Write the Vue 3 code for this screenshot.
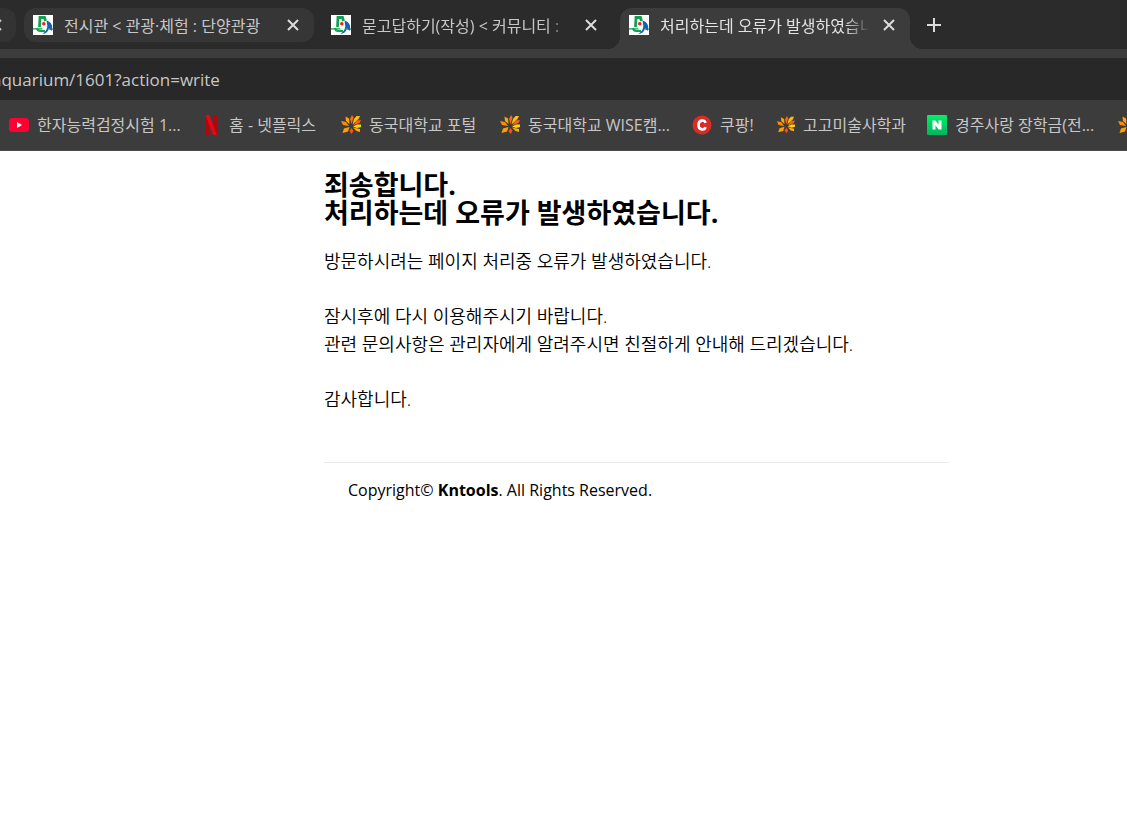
<script setup>
import { ref } from 'vue'

const tabs = ref([
  { id: 1, title: '전시관 < 관광·체험 : 단양관광', state: 'hovered' },
  { id: 2, title: '묻고답하기(작성) < 커뮤니티 :', state: 'idle' },
  { id: 3, title: '처리하는데 오류가 발생하였습니', state: 'active' }
])

const url = ref('aquarium/1601?action=write')

const bookmarks = [
  { icon: 'youtube', label: '한자능력검정시험 1...' },
  { icon: 'netflix', label: '홈 - 넷플릭스' },
  { icon: 'lotus', label: '동국대학교 포털' },
  { icon: 'lotus', label: '동국대학교 WISE캠...' },
  { icon: 'coupang', label: '쿠팡!' },
  { icon: 'lotus-small', label: '고고미술사학과' },
  { icon: 'naver', label: '경주사랑 장학금(전...' },
  { icon: 'lotus', label: '' }
]
</script>

<template>
  <div class="browser">
    <header>
      <div class="tab-strip">
        <div class="tab-stub">
          <svg width="2" height="12" viewBox="10 0 2 12"><path d="M1 1l10 10M11 1L1 11" /></svg>
        </div>
        <div v-for="tab in tabs" :key="tab.id" class="tab" :class="tab.state">
          <svg class="favicon" width="20" height="20" viewBox="0 0 20 20">
            <rect width="20" height="20" fill="#fff" />
            <path d="M6.500 12L7 2.500H11.500L12.500 6" fill="none" stroke="#12a150" stroke-width="2.800" />
            <path d="M0 13.800H9.500M16 14.200H20" fill="none" stroke="#12a150" stroke-width="1.200" />
            <path d="M4 13Q4.500 16 7.500 16H12" fill="none" stroke="#12a150" stroke-width="2" />
            <path d="M13.500 5.500C18 6.500 20.500 11 18.500 16L16 13C15.500 16 13.500 18.500 9.500 19L13 15.500Q15 12 14 9Z" fill="#1261b5" />
            <circle cx="10.800" cy="8.700" r="1.800" fill="#e8251c" />
          </svg>
          <span class="tab-title">{{ tab.title }}</span>
          <button class="icon-button" type="button" aria-label="탭 닫기">
            <svg width="12" height="12" viewBox="0 0 12 12"><path d="M1 1l10 10M11 1L1 11" /></svg>
          </button>
        </div>
        <button class="icon-button new-tab" type="button" aria-label="새 탭">
          <svg width="14" height="14" viewBox="0 0 14 14"><path d="M7 0v14M0 7h14" /></svg>
        </button>
      </div>

      <div class="toolbar">
        <input v-model="url" class="address" type="text" aria-label="주소창" spellcheck="false">
      </div>

      <nav class="bookmarks">
        <a v-for="(mark, i) in bookmarks" :key="i" href="#" :aria-label="mark.label || '북마크'">
          <svg v-if="mark.icon === 'youtube'" width="20" height="20" viewBox="0 0 20 20">
            <rect y="3" width="20" height="14" rx="3.500" fill="#ff0033" />
            <path d="M8 7v6l5-3z" fill="#fff" />
          </svg>
          <svg v-else-if="mark.icon === 'netflix'" width="20" height="20" viewBox="0 0 20 20">
            <path d="M4.500 0h4v20l-4 .5zM12 0h4v20.500l-4-.5z" fill="#b1060f" />
            <path d="M4.500 0h4L16 20.500l-4-.5z" fill="#e50914" />
          </svg>
          <svg v-else-if="mark.icon === 'coupang'" width="20" height="20" viewBox="0 0 20 20">
            <circle cx="10" cy="10" r="9.500" fill="#da2c27" />
            <path d="M13.500 7.800C12.500 4.500 6.500 4.500 6.500 10s6 5.500 7 2.200" fill="none" stroke="#fff" stroke-width="2.600" />
          </svg>
          <svg v-else-if="mark.icon === 'naver'" width="20" height="20" viewBox="0 0 20 20">
            <defs>
              <linearGradient id="naver-bg" x1="0" y1="0" x2="0" y2="1">
                <stop offset="0" stop-color="#00ee68" />
                <stop offset="1" stop-color="#04b45f" />
              </linearGradient>
            </defs>
            <rect width="20" height="20" rx="1" fill="url(#naver-bg)" />
            <path d="M5.500 5.500h3l3 4.300V5.500h3v9h-3l-3-4.300v4.300h-3z" fill="#fff" />
          </svg>
          <svg v-else width="20" height="20" :viewBox="mark.icon === 'lotus' ? '0 0 20 20' : '-2 -1 22 22'">
            <path d="M4.500 1.500L8 3.500 8.500 9 5 6z" fill="#ffa600" />
            <path d="M11 0L12.500 2.500 10.500 9 9 4z" fill="#ff6a10" />
            <path d="M15.500 1H19L17.500 4 11.500 9.500 13 4z" fill="#ffc000" />
            <path d="M16 5.500L20 5 18.500 8 12 10.500z" fill="#ff5f1c" />
            <path d="M12 11.500L16 9.500H20V12L16 13z" fill="#ffd400" />
            <path d="M12 12.500L19 14V17L15.500 16z" fill="#ffae00" />
            <path d="M10.500 13L12.500 16 10.500 19 8.500 16z" fill="#ff5010" />
            <path d="M8.500 12L7 16.500 1.500 18 3 13.500z" fill="#ffa000" />
            <path d="M0 6L5 7 8 11 2 10z" fill="#ff8c00" />
          </svg>
          <span v-if="mark.label">{{ mark.label }}</span>
        </a>
      </nav>
    </header>

    <main>
      <h1>죄송합니다.<br>처리하는데 오류가 발생하였습니다.</h1>
      <p>방문하시려는 페이지 처리중 오류가 발생하였습니다.</p>
      <p>잠시후에 다시 이용해주시기 바랍니다.<br>관련 문의사항은 관리자에게 알려주시면 친절하게 안내해 드리겠습니다.</p>
      <p>감사합니다.</p>
      <footer>Copyright© <strong>Kntools</strong>. All Rights Reserved.</footer>
    </main>
  </div>
</template>

<style>
body {
  margin: 0;
  background: #fff;
}
</style>

<style scoped>
.browser {
  font-family: 'Open Sans', 'Noto Sans CJK KR', sans-serif;
  font-size: 16px;
  color: #000;
}
header {
  background: #3c3c3c;
  color: #c7c7c7;
  border-bottom: 1px solid #4a4a4a;
  overflow: hidden;
}
svg {
  display: block;
  flex: none;
}
.tab-strip {
  display: flex;
  gap: 8px;
  height: 49px;
  padding-top: 8px;
  box-sizing: border-box;
  background: #2b2b2b;
}
.tab-stub {
  display: flex;
  align-items: center;
  width: 16px;
  height: 34px;
  border-radius: 0 12px 12px 0;
  background: #333;
}
.tab-stub svg,
.icon-button svg {
  fill: none;
  stroke: currentColor;
  stroke-width: 2;
}
.tab {
  position: relative;
  display: flex;
  align-items: center;
  width: 290px;
  height: 34px;
  padding: 0 15px 0 9px;
  box-sizing: border-box;
  border-radius: 12px;
}
.tab.hovered {
  background: #363636;
}
.tab.active {
  height: 41px;
  padding-bottom: 7px;
  border-radius: 12px 12px 0 0;
  background: #3c3c3c;
  color: #e3e3e3;
}
/* concave corners where the active tab meets the toolbar */
.tab.active::before,
.tab.active::after {
  content: '';
  position: absolute;
  bottom: 0;
  width: 12px;
  height: 12px;
}
.tab.active::before {
  right: 100%;
  background: radial-gradient(circle at 0 0, transparent 12px, #3c3c3c 12px);
}
.tab.active::after {
  left: 100%;
  background: radial-gradient(circle at 100% 0, transparent 12px, #3c3c3c 12px);
}
.tab-title {
  flex: 1;
  min-width: 0;
  margin: 0 13px 0 11px;
  padding-top: 2px;
  line-height: 24px;
  white-space: nowrap;
  overflow: hidden;
  mask-image: linear-gradient(to right, #000 88%, transparent);
}
.hovered .tab-title {
  mask-image: none;
}
.icon-button {
  display: flex;
  align-items: center;
  justify-content: center;
  padding: 0;
  border: 0;
  background: none;
  color: #dcdcdc;
}
.new-tab {
  width: 32px;
  height: 34px;
}
.toolbar {
  padding-top: 9px;
}
.address {
  display: block;
  width: 100%;
  height: 42px;
  padding: 0;
  box-sizing: border-box;
  border: 0;
  outline: 0;
  background: #282828;
  color: #c7c7c7;
  font: inherit;
  font-size: 17px;
  text-indent: -8px;
}
.bookmarks {
  display: grid;
  grid-template-columns: 172px 120px 139px 172px 63px 132px 171px 20px;
  gap: 20px;
  align-items: center;
  height: 50px;
  padding-left: 9px;
}
.bookmarks a {
  display: flex;
  align-items: center;
  gap: 8px;
  color: inherit;
  text-decoration: none;
  line-height: 24px;
  white-space: nowrap;
}
main {
  padding: 20px 178px 0 324px;
}
h1 {
  margin: 0 0 20px;
  font-size: 27px;
  line-height: 28px;
}
p {
  margin: 0 0 27px;
  font-size: 18px;
  font-weight: 350;
  line-height: 28px;
}
footer {
  margin-top: 49px;
  padding: 13px 24px;
  border-top: 1px solid #ebebeb;
  line-height: 28px;
}
</style>
